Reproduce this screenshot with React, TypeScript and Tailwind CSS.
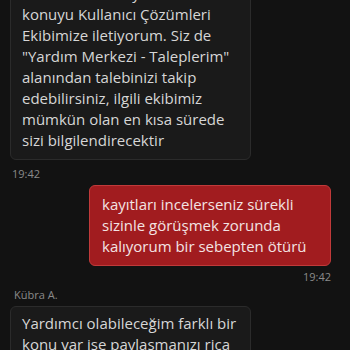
import React from "react";

export default function App() {
  return (
    <div
      className="w-[350px] h-[350px] overflow-hidden bg-[#121212] text-[15px] leading-[21px]"
      style={{ fontFamily: '"Open Sans", sans-serif' }}
    >
      <div className="flex flex-col pl-[10px] pr-[19px] -mt-[26px]">
        <div className="self-start w-[241px] rounded-[6px] border border-[#2b2b2b] bg-[#1a1a1a] px-[11px] pt-[8px] pb-[8px] text-[#d6d6d6]">
          Talebinizi inceleyerek bu
          <br />
          konuyu Kullanıcı Çözümleri Ekibimize iletiyorum. Siz de "Yardım Merkezi - Taleplerim" alanından talebinizi takip edebilirsiniz, ilgili ekibimiz mümkün olan en kısa sürede sizi bilgilendirecektir
        </div>
        <div className="mt-[6px] pl-[2px] text-[11px] leading-[15px] text-[#8a8a8a]">19:42</div>

        <div className="self-end mt-[4px] w-[242px] rounded-[6px] border border-[#c03a3a] bg-[#a11c1f] px-[12px] pt-[8px] pb-[8px] text-[#f3e3e3]">
          kayıtları incelerseniz sürekli sizinle görüşmek zorunda kalıyorum bir sebepten ötürü
        </div>
        <div className="self-end mt-[3px] text-[11px] leading-[15px] text-[#8a8a8a]">19:42</div>

        <div className="mt-[3px] pl-[4px] text-[11px] leading-[15px] text-[#8a8a8a]">Kübra A.</div>
        <div className="self-start mt-[4px] w-[241px] rounded-[6px] border border-[#2b2b2b] bg-[#1a1a1a] px-[11px] pt-[6px] pb-[8px] text-[#d6d6d6]">
          Yardımcı olabileceğim farklı bir konu var ise paylaşmanızı rica ederim
        </div>
      </div>
    </div>
  );
}
